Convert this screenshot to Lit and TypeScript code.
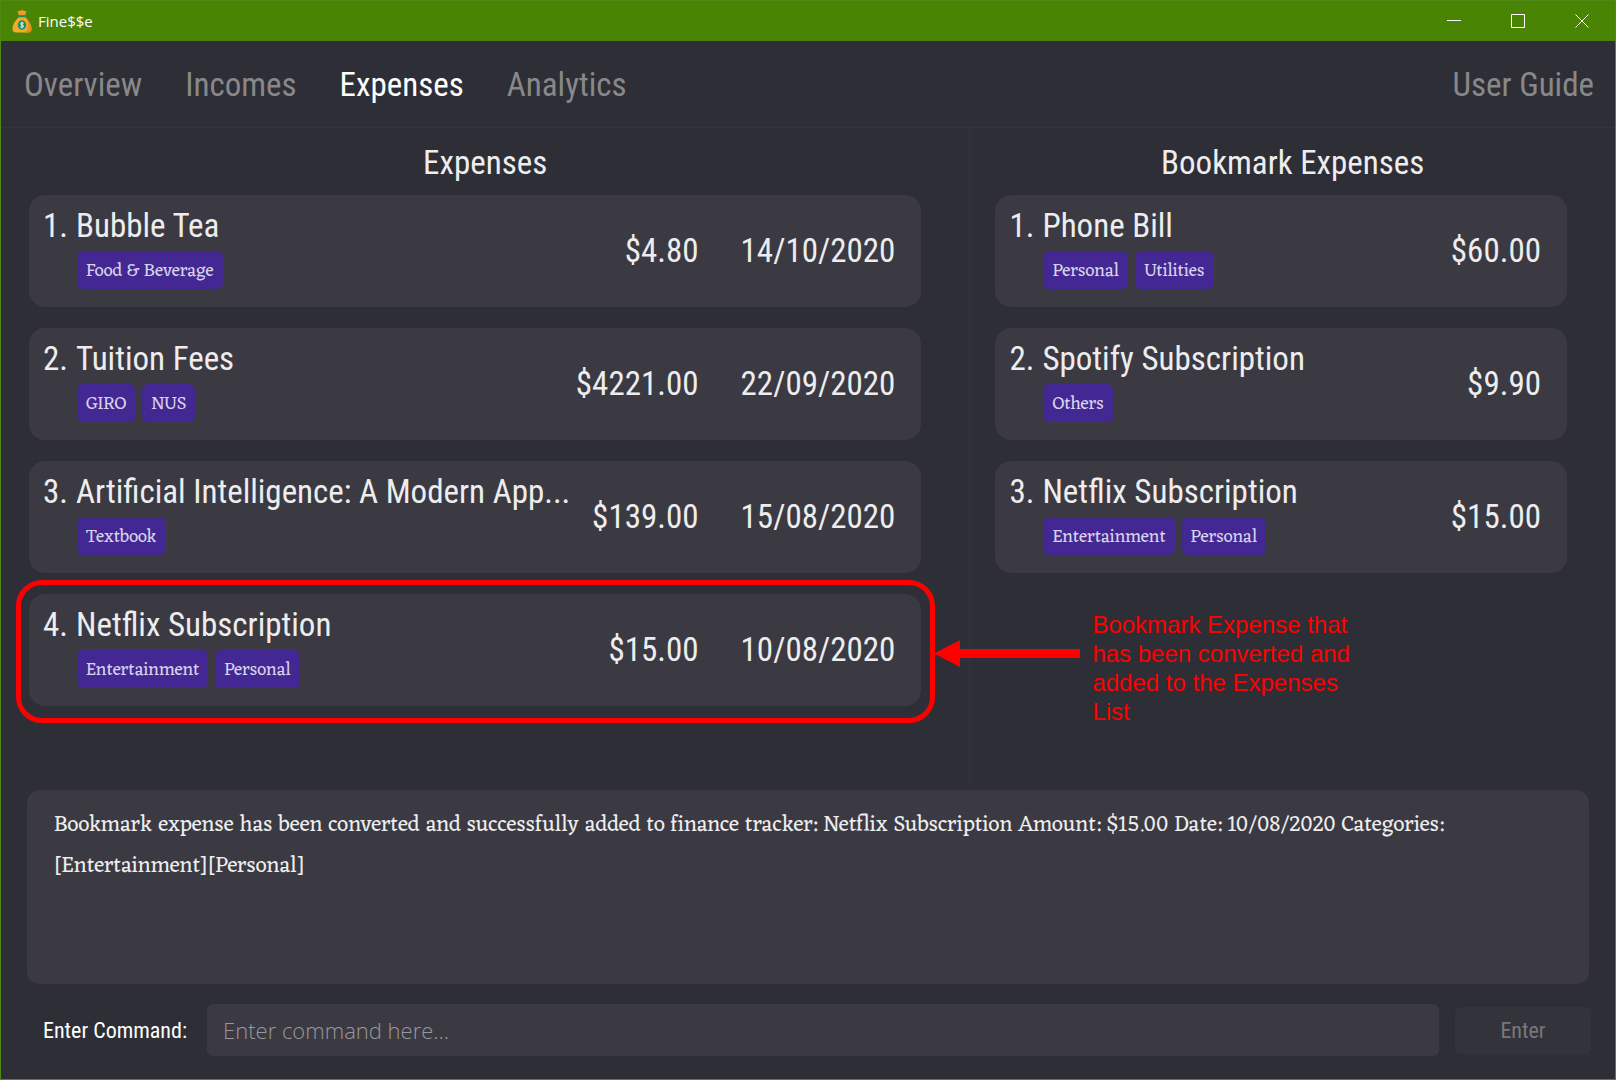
import { LitElement, html, css, svg, nothing } from "lit";
import { customElement, property } from "lit/decorators.js";
import { classMap } from "lit/directives/class-map.js";

interface Entry {
  name: string;
  tags: string[];
  amount: string;
  date?: string;
  note?: string;
}

const EXPENSES: Entry[] = [
  { name: "Bubble Tea", tags: ["Food & Beverage"], amount: "$4.80", date: "14/10/2020" },
  { name: "Tuition Fees", tags: ["GIRO", "NUS"], amount: "$4221.00", date: "22/09/2020" },
  { name: "Artificial Intelligence: A Modern App...", tags: ["Textbook"], amount: "$139.00", date: "15/08/2020" },
  {
    name: "Netflix Subscription",
    tags: ["Entertainment", "Personal"],
    amount: "$15.00",
    date: "10/08/2020",
    note: "Bookmark Expense that has been converted and added to the Expenses List",
  },
];

const BOOKMARKS: Entry[] = [
  { name: "Phone Bill", tags: ["Personal", "Utilities"], amount: "$60.00" },
  { name: "Spotify Subscription", tags: ["Others"], amount: "$9.90" },
  { name: "Netflix Subscription", tags: ["Entertainment", "Personal"], amount: "$15.00" },
];

const TABS = ["Overview", "Incomes", "Expenses", "Analytics"];

const moneyBag = svg`
  <path d="M5.500 1.500 L8 .8 L10 0 L12 .8 L14.500 1.500 L13 5.500 H7 Z" fill="#f0992a"/>
  <path d="M7 7 C3 10.500 .5 15 .5 18.500 C.5 21.500 2 22.500 4 22.500 H16 C18 22.500 19.500 21.500 19.500 18.500 C19.500 15 17 10.500 13 7 Z" fill="#f7a928"/>
  <path d="M13 7 C17 10.500 19.500 15 19.500 18.500 C19.500 21.500 18 22.500 16 22.500 H12.500 C18 20 17 12 13 7 Z" fill="#e0901f"/>
  <rect x="6" y="5.300" width="8" height="2" rx="1" fill="#1f8f5a"/>
  <ellipse cx="10" cy="15" rx="4.200" ry="4.700" fill="#16906a"/>
  <path d="M11.800 13.400 C10.800 12.400 8.500 12.600 8.500 13.900 C8.500 15.400 11.700 14.600 11.700 16.200 C11.700 17.600 9.200 17.600 8.200 16.700 M10 11.800 V18.300" fill="none" stroke="#f1f3d8" stroke-width="1"/>`;

@customElement("entry-list")
export class EntryList extends LitElement {
  @property() heading = "";
  @property({ attribute: false }) entries: Entry[] = [];

  static styles = css`
    :host { display: block; }
    .heading {
      margin: 0;
      font-size: 33px;
      font-weight: 400;
      line-height: 40px;
      text-align: center;
    }
    .list {
      display: flex;
      flex-direction: column;
      gap: 21px;
      margin: 0;
      padding: 12px 48px 0 var(--inset, 28px);
      list-style: none;
    }
    .card {
      position: relative;
      display: flex;
      align-items: center;
      gap: 42px;
      box-sizing: border-box;
      height: 112px;
      padding: 0 26px 0 14px;
      border-radius: 16px;
      background: #3b3a43;
      font-size: 33px;
      line-height: 36px;
      white-space: nowrap;
    }
    .summary {
      flex: 1;
      display: grid;
      grid-template-columns: 33px minmax(0, 1fr);
      align-self: flex-start;
      row-gap: 7px;
      min-width: 0;
      padding-top: 13px;
    }
    .title { margin: 0; font-size: inherit; font-weight: 400; }
    .tags { grid-column: 2; display: flex; gap: 7px; padding-left: 1px; }
    .tag {
      padding: 2px 9px 0;
      border-radius: 6px;
      background: #432893;
      color: #d9d3ea;
      font-family: "Eczar", "Noto Serif", "Liberation Serif", serif;
      font-size: 18px;
      line-height: 36px;
    }
    .frame {
      position: absolute;
      inset: -14px -14px -17px -13px;
      border: 5px solid #f00;
      border-radius: 26px;
    }
    .callout {
      position: absolute;
      left: calc(100% + 13px);
      top: 16px;
      display: flex;
      align-items: flex-start;
      gap: 12px;
      color: #f00;
      font-family: "Liberation Sans", Arial, sans-serif;
      font-size: 24px;
      line-height: 29px;
      white-space: normal;
    }
    .arrow { flex: none; margin-top: 30px; }
    .note { width: 264px; margin: 0; }
  `;

  render() {
    return html`
      <h2 class="heading">${this.heading}</h2>
      <ol class="list">
        ${this.entries.map(
          (e, i) => html`
            <li class="card">
              <div class="summary">
                <span class="index">${i + 1}.</span>
                <h3 class="title">${e.name}</h3>
                <div class="tags">${e.tags.map((t) => html`<span class="tag">${t}</span>`)}</div>
              </div>
              <span class="amount">${e.amount}</span>
              ${e.date ? html`<time class="date">${e.date}</time>` : nothing}
              ${e.note
                ? html`
                    <div class="frame"></div>
                    <div class="callout">
                      <svg class="arrow" width="146" height="27" viewBox="0 0 146 27" fill="#f00" aria-hidden="true">
                        <path d="M0 13.500 L26 0 V9 H146 V18 H26 V27 Z" />
                      </svg>
                      <p class="note">${e.note}</p>
                    </div>
                  `
                : nothing}
            </li>
          `
        )}
      </ol>
    `;
  }
}

@customElement("app-root")
export class AppRoot extends LitElement {
  static styles = css`
    :host {
      display: flex;
      flex-direction: column;
      box-sizing: border-box;
      min-height: 100vh;
      border: 1px solid #4f8a14;
      background: #2e2e36;
      color: #ededee;
      font-family: "Roboto Condensed", "Liberation Sans Narrow", "Roboto", sans-serif;
    }
    .titlebar {
      display: flex;
      align-items: center;
      height: 40px;
      padding-left: 11px;
      background: #498405;
      color: #fff;
      font-family: "Open Sans", sans-serif;
      font-size: 15px;
    }
    .appname { flex: 1; margin-left: 6px; }
    .winbtn {
      display: grid;
      place-items: center;
      width: 64px;
      height: 40px;
      padding: 0 2px 0 0;
      border: 0;
      background: none;
      color: #fff;
    }
    .nav {
      display: flex;
      align-items: center;
      gap: 43px;
      height: 86px;
      padding: 0 21px 0 23px;
      border-bottom: 1px solid #34343c;
      font-size: 33px;
    }
    .link { color: #88888a; text-decoration: none; }
    .link.active { color: #fff; }
    .guide { margin-left: auto; }
    .columns { flex: 1; display: grid; grid-template-columns: minmax(0, 3fr) minmax(0, 2fr); }
    .column { padding-top: 15px; }
    .column + .column { --inset: 25px; border-left: 1px solid #34343c; }
    .result {
      box-sizing: border-box;
      min-height: 194px;
      margin: 6px 26px 0;
      padding: 15px 27px;
      border-radius: 13px;
      background: #3b3a43;
      font-family: "Eczar", "Noto Serif", "Liberation Serif", serif;
      font-size: 22px;
      line-height: 41px;
    }
    .categories { white-space: nowrap; }
    .command {
      display: flex;
      align-items: center;
      height: 52px;
      margin: 20px 24px 23px 42px;
      font-size: 22px;
    }
    .label { color: #fff; margin-right: 20px; }
    .input {
      flex: 1;
      box-sizing: border-box;
      min-width: 0;
      height: 52px;
      padding: 0 16px;
      border: 0;
      border-radius: 6px;
      background: #3b3a43;
      color: #ededee;
      font-family: "Open Sans", sans-serif;
      font-size: 22px;
      font-weight: 300;
    }
    .input::placeholder { color: #98989b; opacity: 1; }
    .enter {
      width: 136px;
      height: 47px;
      margin-left: 16px;
      border: 0;
      border-radius: 6px;
      background: #33333b;
      color: #78787c;
      font: inherit;
    }
  `;

  render() {
    return html`
      <header class="titlebar">
        <svg width="20" height="23" viewBox="0 0 20 23" aria-hidden="true">${moneyBag}</svg>
        <span class="appname">Fine$$e</span>
        <button class="winbtn" aria-label="Minimize">
          <svg width="14" height="14" stroke="currentColor"><path d="M0 6.500H14" /></svg>
        </button>
        <button class="winbtn" aria-label="Maximize">
          <svg width="14" height="14" stroke="currentColor" fill="none"><path d="M.5 .5H13.500V13.500H.5Z" /></svg>
        </button>
        <button class="winbtn" aria-label="Close">
          <svg width="14" height="14" stroke="currentColor"><path d="M.5 .5L13.500 13.500M13.500 .5L.5 13.500" /></svg>
        </button>
      </header>
      <nav class="nav">
        ${TABS.map(
          (t) => html`<a class=${classMap({ link: true, active: t === "Expenses" })} href="#${t.toLowerCase()}">${t}</a>`
        )}
        <a class="link guide" href="#guide">User Guide</a>
      </nav>
      <main class="columns">
        <entry-list class="column" heading="Expenses" .entries=${EXPENSES}></entry-list>
        <entry-list class="column" heading="Bookmark Expenses" .entries=${BOOKMARKS}></entry-list>
      </main>
      <div class="result" role="status">
        Bookmark expense has been converted and successfully added to finance tracker: Netflix Subscription Amount:
        $15.00 Date: 10/08/2020 Categories: <span class="categories">[Entertainment][Personal]</span>
      </div>
      <form class="command" @submit=${(e: Event) => e.preventDefault()}>
        <label class="label" for="command">Enter Command:</label>
        <input class="input" id="command" type="text" placeholder="Enter command here..." />
        <button class="enter" disabled>Enter</button>
      </form>
    `;
  }
}
